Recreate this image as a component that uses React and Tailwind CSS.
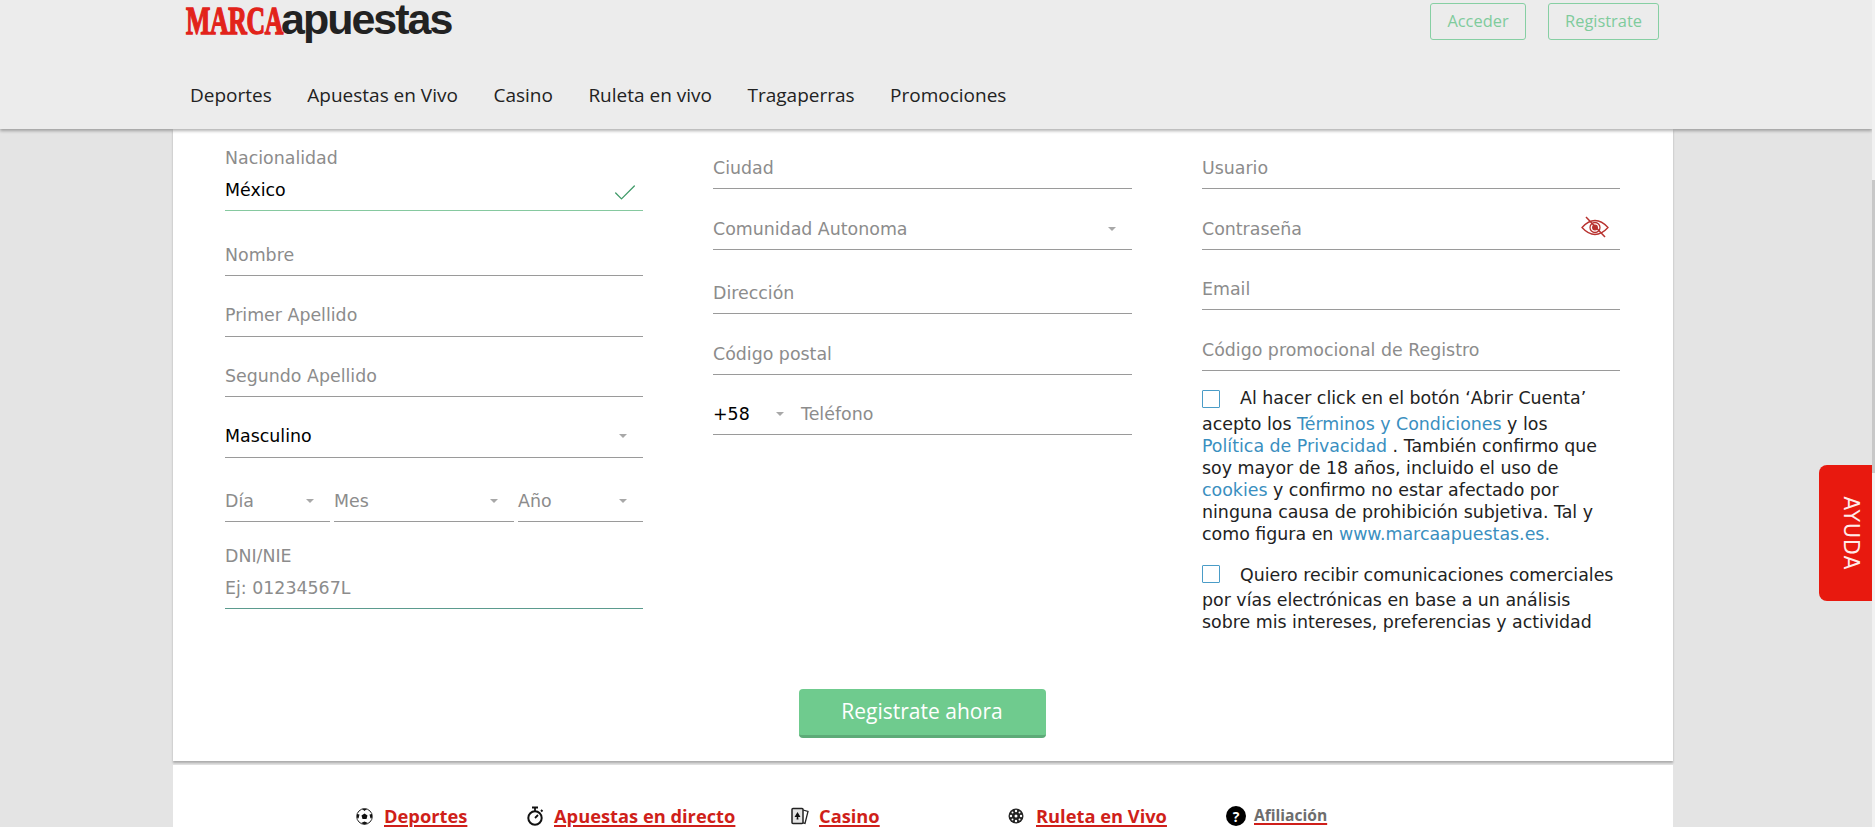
import { Check } from 'lucide-react';

const formFont = "font-['DejaVu_Sans',sans-serif]";
const uiFont = "font-['Open_Sans',sans-serif]";

function Caret() {
  return <span className="w-0 h-0 border-x-[4px] border-x-transparent border-t-[4px] border-t-[#a8a8a8]" />;
}

function Field({ h, children, line = 'border-[#9a9a9a]' }) {
  return (
    <div style={{ height: h }} className={`flex items-end border-b ${line}`}>
      {children}
    </div>
  );
}

function Input({ h, label, select, dark, right, rowClass = 'mb-[8px]' }) {
  return (
    <Field h={h}>
      <div className={`flex w-full h-[24px] items-center justify-between leading-[24px] ${rowClass}`}>
        <span className={dark ? 'text-black' : 'text-[#8c8c8c]'}>{label}</span>
        {select && <span className="flex mr-[16px]"><Caret /></span>}
        {right}
      </div>
    </Field>
  );
}

function EyeOff() {
  return (
    <svg width="28" height="22" viewBox="0 0 28 22" fill="none" stroke="#b8322f" strokeWidth="1.300" className="mr-[11px] -mt-[4px]">
      <path d="M1 11.500C6 6 10 4.500 14 4.500S22 6 27 11.500C22 17 18 18.500 14 18.500S6 17 1 11.500Z" />
      <circle cx="14" cy="11.500" r="5" />
      <circle cx="14" cy="11.500" r="2.300" fill="#b8322f" />
      <path d="M5 1L24 21" strokeWidth="1.500" />
    </svg>
  );
}

function BoxCheck({ className = 'my-[5px]' }) {
  return <span className={`inline-block w-[18px] h-[18px] border border-[#4a9cc7] rounded-[1px] mr-[20px] align-middle ${className}`} />;
}

function Link2({ children }) {
  return <a className="text-[#3a8fc0]">{children}</a>;
}

function Ball() {
  return (
    <svg width="17" height="17" viewBox="0 0 17 17">
      <circle cx="8.500" cy="8.500" r="7.800" fill="#fff" stroke="#222" strokeWidth="1" />
      <path d="M8.500 5.500L11.500 7.500L10.500 11H6.500L5.500 7.500Z M6 0.800L11 0.800L8.500 3Z M1 6L3.500 6.500L2.500 10.500L1 9.500Z M16 6L13.500 6.500L14.500 10.500L16 9.500Z M5 15L8.500 13.500L12 15L8.500 16.500Z" fill="#111" />
    </svg>
  );
}

function Watch() {
  return (
    <svg width="18" height="20" viewBox="0 0 18 20" fill="none" stroke="#111">
      <circle cx="9" cy="12" r="6.700" strokeWidth="2" />
      <path d="M6 1.500H12M9 2V5M9 12L12 9M15 4L16.500 5.500" strokeWidth="1.800" />
    </svg>
  );
}

function Cards() {
  return (
    <svg width="18" height="19" viewBox="0 0 18 19">
      <path d="M12 3L17 4.500L14 16.500L11 15.500" fill="#fff" stroke="#222" strokeWidth="1.300" />
      <rect x="1" y="1.500" width="11" height="15" rx="1" fill="#e5e5e5" stroke="#222" strokeWidth="1.500" />
      <path d="M6.500 5L9.500 10H3.500Z M6 9H7L7.500 12.500H5.500Z" fill="#111" />
    </svg>
  );
}

function Wheel() {
  return (
    <svg width="16" height="16" viewBox="0 0 16 16" fill="#222">
      <circle cx="8" cy="8" r="7.500" />
      <g fill="#fff">
        <circle cx="8" cy="8" r="1.500" />
        <circle cx="8" cy="3" r="1.200" />
        <circle cx="8" cy="13" r="1.200" />
        <circle cx="3" cy="8" r="1.200" />
        <circle cx="13" cy="8" r="1.200" />
        <circle cx="4.500" cy="4.500" r="1" />
        <circle cx="11.500" cy="4.500" r="1" />
        <circle cx="4.500" cy="11.500" r="1" />
        <circle cx="11.500" cy="11.500" r="1" />
      </g>
    </svg>
  );
}

function FooterLink({ icon, label, grey, className = '' }) {
  return (
    <div className={`flex items-center ${className}`}>
      <span className="flex w-[28px] shrink-0">{icon}</span>
      <a className={`font-bold underline decoration-[#cf1f1a] underline-offset-2 decoration-2 ${grey ? 'text-[15.600px] text-[#6d6d6d]' : 'text-[18.300px] text-[#cf1f1a]'}`}>
        {label}
      </a>
    </div>
  );
}

export default function App() {
  return (
    <div className={`relative h-[827px] overflow-hidden bg-[#e4e4e4] text-[17.400px] ${formFont}`}>
      {/* header */}
      <header className={`w-[1872px] h-[129px] bg-[#ececec] shadow-[0_2px_3px_rgba(0,0,0,0.3)] relative z-10 ${uiFont}`}>
        <div className="flex justify-between w-[1500px] ml-[186px]">
          <div className="flex items-baseline h-[44px] pt-[2px]">
            <span className="inline-block origin-left scale-x-[0.66] mr-[-52px] whitespace-nowrap leading-[38px] font-['Liberation_Serif',serif] font-bold text-[#e2231a] text-[39px] tracking-[-0.5px] [-webkit-text-stroke:1.500px_#e2231a]">MARCA</span>
            <span className="inline-block leading-[34px] font-['Liberation_Sans',sans-serif] font-bold text-[#222] text-[43px] tracking-[-2px]">apuestas</span>
          </div>
          <div className="flex gap-[22px] mr-[27px] pt-[3px]">
            <button className="w-[96px] h-[37px] border border-[#86cfa3] rounded-[3px] text-[16.400px] text-[#7fcb9c]">Acceder</button>
            <button className="w-[111px] h-[37px] border border-[#86cfa3] rounded-[3px] text-[16.400px] text-[#7fcb9c]">Registrate</button>
          </div>
        </div>
        <nav className="flex gap-[35.500px] ml-[190px] mt-[38px] text-[19px] leading-[26px] text-[#222]">
          <a>Deportes</a>
          <a>Apuestas en Vivo</a>
          <a>Casino</a>
          <a>Ruleta en vivo</a>
          <a>Tragaperras</a>
          <a>Promociones</a>
        </nav>
      </header>

      {/* form card */}
      <main className="w-[1500px] h-[632px] ml-[173px] bg-white shadow-[0_2px_2px_rgba(0,0,0,0.25)] px-[52px]">
        <div className="grid grid-cols-[418px_419px_418px] gap-x-[70px] items-start h-[510px]">
          <div>
            <Field h={82} line="border-[#86c9a0]">
              <div className="w-full mb-[8px]">
                <div className="text-[#8c8c8c] leading-[24px] mb-[8px]">Nacionalidad</div>
                <div className="flex justify-between h-[24px] leading-[24px] text-black">
                  México
                  <Check size={28} strokeWidth={1.100} color="#3f9a68" className="mr-[4px] mt-[1px]" />
                </div>
              </div>
            </Field>
            <Input h={65} label="Nombre" />
            <Input h={61} label="Primer Apellido" rowClass="mb-[9px]" />
            <Input h={60} label="Segundo Apellido" />
            <Input h={61} label="Masculino" select dark rowClass="mb-[9px]" />
            <div className="grid grid-cols-[105px_180px_125px] gap-x-[4px]">
              <Input h={64} label="Día" select />
              <Input h={64} label="Mes" select />
              <Input h={64} label="Año" select />
            </div>
            <Field h={87} line="border-[#5b9b8e]">
              <div className="w-full mb-[8px] text-[#8c8c8c] leading-[24px]">
                <div className="mb-[8px]">DNI/NIE</div>
                <div>Ej: 01234567L</div>
              </div>
            </Field>
          </div>

          <div>
            <Input h={60} label="Ciudad" />
            <Input h={61} label="Comunidad Autonoma" select />
            <Input h={64} label="Dirección" />
            <Input h={61} label="Código postal" />
            <Field h={60}>
              <div className="flex items-center w-full h-[24px] mb-[8px] leading-[24px]">
                <span className="w-[63px] text-black">+58</span>
                <Caret />
                <span className="ml-[17px] text-[#8c8c8c]">Teléfono</span>
              </div>
            </Field>
          </div>

          <div>
            <Input h={60} label="Usuario" />
            <Input h={61} label="Contraseña" right={<EyeOff />} />
            <Input h={60} label="Email" />
            <Input h={61} label="Código promocional de Registro" />
            <div className="pt-[14px] leading-[22px] text-[#222]">
              <p>
                <BoxCheck />Al hacer click en el botón ‘Abrir Cuenta’<br />
                acepto los <Link2>Términos y Condiciones</Link2> y los<br />
                <Link2>Política de Privacidad</Link2> . También confirmo que<br />
                soy mayor de 18 años, incluido el uso de<br />
                <Link2>cookies</Link2> y confirmo no estar afectado por<br />
                ninguna causa de prohibición subjetiva. Tal y<br />
                como figura en <Link2>www.marcaapuestas.es.</Link2>
              </p>
              <p className="mt-[18px]">
                <BoxCheck className="my-[4px] -translate-y-[2px]" />Quiero recibir comunicaciones comerciales por vías electrónicas en base a un análisis sobre mis intereses, preferencias y actividad
              </p>
            </div>
          </div>
        </div>
        <div className="flex justify-center mt-[50px] mr-[2px]">
          <button className={`w-[247px] h-[49px] rounded-[4px] bg-[#6fcb8e] border-b-[3px] border-[#5dab78] text-white text-[21px] ${uiFont}`}>
            Registrate ahora
          </button>
        </div>
      </main>

      {/* footer links */}
      <footer className={`w-[1500px] h-[70px] ml-[173px] mt-[4px] bg-white pt-[38px] ${uiFont}`}>
        <div className="flex ml-[183px] h-[26px]">
          <FooterLink icon={<Ball />} label="Deportes" className="w-[170px]" />
          <FooterLink icon={<Watch />} label="Apuestas en directo" className="w-[265px]" />
          <FooterLink icon={<Cards />} label="Casino" className="w-[217px]" />
          <FooterLink icon={<Wheel />} label="Ruleta en Vivo" className="w-[218px]" />
          <FooterLink icon={<span className="flex items-center justify-center w-[20px] h-[20px] rounded-full bg-black text-white text-[14px] font-bold">?</span>} label="Afiliación" grey />
        </div>
      </footer>

      {/* ayuda tab */}
      <div className="absolute right-[3px] top-[465px] w-[53px] h-[136px] rounded-l-[8px] bg-[#e8190f] flex items-center justify-center z-20">
        <span className="rotate-90 ml-[10px] text-[#ffecea] text-[20.500px] tracking-[1px]">AYUDA</span>
      </div>

      {/* scrollbar strip */}
      <div className="absolute right-0 top-0 w-[3px] h-full bg-[#f1f1f1] z-20">
        <div className="mt-[180px] h-[293px] bg-[#c8c8c8]" />
      </div>
    </div>
  );
}
